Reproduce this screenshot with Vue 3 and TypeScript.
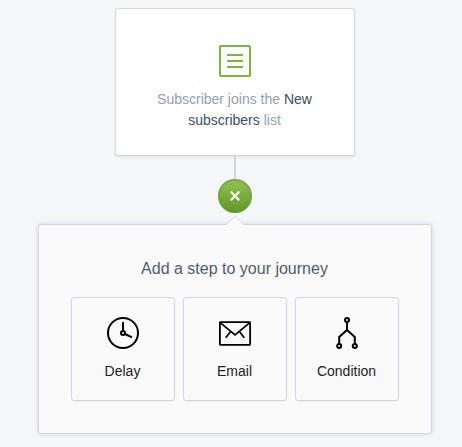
<script setup lang="ts">
type StepKind = 'delay' | 'email' | 'condition'

interface Step {
  kind: StepKind
  label: string
}

const steps: Step[] = [
  { kind: 'delay', label: 'Delay' },
  { kind: 'email', label: 'Email' },
  { kind: 'condition', label: 'Condition' },
]
</script>

<template>
  <main class="journey">
    <section class="trigger">
      <svg class="trigger-icon" width="32" height="32" viewBox="0 0 32 32" fill="none">
        <rect x="1" y="1" width="30" height="30" rx="1" />
        <path d="M8 10h16M8 16h16M8 22h16" />
      </svg>
      <p class="trigger-text">Subscriber joins the <strong>New subscribers</strong> list</p>
    </section>
    <div class="connector"></div>
    <button class="toggle" type="button">
      <svg width="10" height="10" viewBox="0 0 10 10" fill="none">
        <path d="M0.8 0.8l8.4 8.4M9.2 0.8l-8.4 8.4" />
      </svg>
    </button>
    <section class="panel">
      <svg class="arrow" width="20" height="10" viewBox="0 0 20 10">
        <path class="arrow-fill" d="M0 10L1 9L10 0.5L19 9L20 10Z" />
        <path class="arrow-edge" d="M0.5 8.5L10 0.5L19.5 8.5" />
      </svg>
      <h2 class="panel-title">Add a step to your journey</h2>
      <div class="steps">
        <button v-for="step in steps" :key="step.kind" class="step" type="button">
          <svg class="step-icon" width="32" height="32" viewBox="0 0 32 32" fill="none">
            <template v-if="step.kind === 'delay'">
              <circle cx="16" cy="16" r="15" />
              <circle cx="16" cy="16" r="2" />
              <path d="M16 5v9M18 17l7 3.3" />
            </template>
            <template v-else-if="step.kind === 'email'">
              <rect x="0.9" y="5.2" width="30.2" height="22.6" rx="0.5" stroke-width="1.8" />
              <path stroke-width="1.7" d="M1.5 5.8L16 18L30.5 5.8M11.6 14.4L6.7 20.8M20.4 14.4L25.3 20.8" />
            </template>
            <template v-else>
              <circle cx="16" cy="3" r="2" />
              <circle cx="8.2" cy="29" r="2" />
              <circle cx="23.8" cy="29" r="2" />
              <path d="M16 5v8L8.2 20v7M16 13l7.8 7v7" />
            </template>
          </svg>
          <span class="step-label">{{ step.label }}</span>
        </button>
      </div>
    </section>
  </main>
</template>

<style>
body {
  background: #f4f6f8;
}
</style>

<style scoped>
.journey {
  box-sizing: border-box;
  height: 447px;
  padding: 8px 30px 0 38px;
  display: flex;
  flex-direction: column;
  align-items: center;
  background: #f4f6f8;
  font-family: "Liberation Sans", Arial, sans-serif;
}

.trigger {
  box-sizing: border-box;
  width: 240px;
  height: 148px;
  padding: 36px 30px 0;
  display: flex;
  flex-direction: column;
  align-items: center;
  background: #fff;
  border: 1px solid #d1d6df;
  border-radius: 3px;
  box-shadow: 0 1px 2px rgba(100, 110, 140, 0.16);
}

.trigger-icon {
  display: block;
  stroke: #7fb241;
  stroke-width: 2;
}

.trigger-text {
  margin: 12px 0 0;
  padding-right: 1px;
  color: #929eb2;
  font-size: 14px;
  line-height: 21px;
  text-align: center;
}

.trigger-text strong {
  color: #434d5d;
  font-weight: 400;
}

.connector {
  width: 2px;
  height: 23px;
  background: #d1d6df;
}

.toggle {
  width: 34px;
  height: 34px;
  padding: 0;
  display: flex;
  align-items: center;
  justify-content: center;
  border: 0;
  border-radius: 50%;
  background: linear-gradient(#92c354, #61962b);
  box-shadow: inset 0 0 0 1px rgba(80, 140, 30, 0.25), inset 0 2px 2px rgba(90, 145, 35, 0.35);
}

.toggle svg {
  stroke: #fff;
  stroke-width: 2.1;
}

.panel {
  position: relative;
  box-sizing: border-box;
  width: 394px;
  height: 210px;
  margin-top: 11px;
  padding: 34px 32px 0;
  background: #fafafa;
  border: 1px solid #d1d5e0;
  border-radius: 3px;
  box-shadow: 0 0 5px rgba(100, 110, 145, 0.22);
}

.arrow {
  position: absolute;
  top: -9px;
  left: 186px;
}

.arrow-fill {
  fill: #fafafa;
}

.arrow-edge {
  fill: none;
  stroke: #d7dae4;
}

.panel-title {
  margin: 0;
  padding-right: 1px;
  color: #515b6d;
  font-size: 16px;
  font-weight: 400;
  line-height: 20px;
  text-align: center;
}

.steps {
  margin-top: 18px;
  display: flex;
  gap: 8px;
}

.step {
  box-sizing: border-box;
  width: 104px;
  height: 104px;
  padding: 19px 0 0;
  display: flex;
  flex-direction: column;
  align-items: center;
  background: #fafafa;
  border: 1px solid #d1d6e2;
  border-radius: 3px;
  box-shadow: 0 1px 1px rgba(100, 110, 145, 0.08);
  color: #202226;
  font: 14px/20px "Liberation Sans", Arial, sans-serif;
}

.step-icon {
  display: block;
  stroke: #000;
  stroke-width: 2;
}

.step-label {
  margin-top: 12px;
  padding-right: 1px;
}
</style>
